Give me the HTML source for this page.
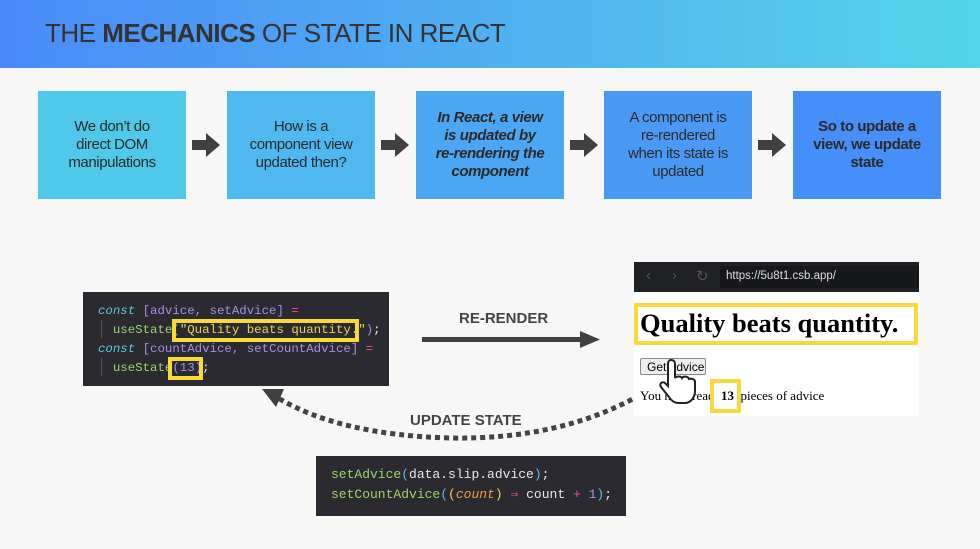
<!DOCTYPE html>
<html><head><meta charset="utf-8"><style>
*{margin:0;padding:0;box-sizing:border-box}
body{width:980px;height:549px;background:#f7f7f7;position:relative;overflow:hidden;font-family:"Liberation Sans",sans-serif}
.hdr{position:absolute;left:0;top:0;width:980px;height:68px;background:linear-gradient(90deg,#4a8af8,#55d5e8)}
.hdr h1{position:absolute;left:45px;top:18px;font-weight:400;font-size:26px;color:#333;letter-spacing:-0.5px}
.box{position:absolute;top:91px;width:148px;height:108px;display:flex;align-items:center;justify-content:center;text-align:center;font-size:15px;line-height:18px;color:#2a2a2a;padding:0 4px;letter-spacing:-0.4px}
.mono{font-family:"Liberation Mono",monospace}
.code{position:absolute;background:#2b2a30;font-size:12.4px;line-height:19px;white-space:pre}
.k{color:#5fc6e0;font-style:italic}.p{color:#a98de8}.g{color:#9bd36a}.y{color:#f2d24a}.r{color:#f0508a}.w{color:#e8e8e8}.o{color:#f09a40;font-style:italic}.b{color:#62b8f0}
.yb{position:absolute;border:4px solid #f9d93a}
.lbl{position:absolute;font-weight:700;font-size:15px;color:#444}
</style></head><body>
<div class="hdr"><h1>THE <b>MECHANICS</b> OF STATE IN REACT</h1></div>
<div class="box" style="left:38px;background:#50c8ea">We don’t do<br>direct DOM<br>manipulations</div>
<div class="box" style="left:227px;background:#4fb8ee">How is a<br>component view<br>updated then?</div>
<div class="box" style="left:416px;background:#4ba7f2;font-style:italic;font-weight:700">In React, a view<br>is updated by<br>re-rendering the<br>component</div>
<div class="box" style="left:604px;background:#4a9af5">A component is<br>re-rendered<br>when its state is<br>updated</div>
<div class="box" style="left:793px;background:#468ef8;font-weight:700">So to update a<br>view, we update<br>state</div>
<svg style="position:absolute;left:0;top:0" width="980" height="549">
<g fill="#404040">
<path d="M192 140h14v-7l14 12-14 12v-7h-14z"/>
<path d="M381 140h14v-7l14 12-14 12v-7h-14z"/>
<path d="M570 140h14v-7l14 12-14 12v-7h-14z"/>
<path d="M758 140h14v-7l14 12-14 12v-7h-14z"/>
<rect x="422" y="337" width="160" height="5"/>
<path d="M580 331l20 8.5-20 8.5z"/>
<path d="M262 389l22 0-8 18z"/>
</g>
<path d="M640 395 Q560 440 450 438 Q340 435 278 398" fill="none" stroke="#444" stroke-width="5" stroke-dasharray="5 4"/>
</svg>
<div class="lbl" style="left:459px;top:310px">RE-RENDER</div>
<div class="lbl" style="left:410px;top:412px">UPDATE STATE</div>
<div class="code mono" style="left:83px;top:292px;width:306px;height:94px;padding:10px 0 0 15px"><span class="k">const</span> <span class="p">[advice, setAdvice]</span> <span class="r">=</span>
  <span class="g">useState</span><span class="p">(</span><span class="y">"Quality beats quantity."</span><span class="p">)</span><span class="w">;</span>
<span class="k">const</span> <span class="p">[countAdvice, setCountAdvice]</span> <span class="r">=</span>
  <span class="g">useState</span><span class="p">(13)</span><span class="w">;</span></div>
<div style="position:absolute;left:101px;top:320px;width:1px;height:18px;background:#555"></div>
<div style="position:absolute;left:101px;top:358px;width:1px;height:18px;background:#555"></div>
<div class="yb" style="left:172px;top:319px;width:187px;height:23px"></div>
<div class="yb" style="left:168px;top:357px;width:35px;height:23px"></div>
<div style="position:absolute;left:634px;top:262px;width:285px;height:154px;background:#fff"></div>
<div style="position:absolute;left:634px;top:262px;width:285px;height:30px;background:#202124;color:#555;font-size:15px">
<span style="position:absolute;left:12px;top:5px">‹</span><span style="position:absolute;left:38px;top:5px">›</span><span style="position:absolute;left:62px;top:5px">↻</span>
<div style="position:absolute;left:86px;top:4px;width:199px;height:22px;background:#17181b;color:#ddd;font-size:11.5px;padding:4px 0 0 6px">https://5u8t1.csb.app/</div></div>
<div class="yb" style="left:634px;top:303px;width:284px;height:42px"></div>
<div style="position:absolute;left:640px;top:308px;font:700 26.5px 'Liberation Serif',serif;color:#000">Quality beats quantity.</div>
<div style="position:absolute;left:640px;top:358px;width:66px;height:17px;border:1px solid #888;border-radius:2px;background:#eee;font-size:12px;padding:1px 0 0 6px">Get advice</div>
<div style="position:absolute;left:640px;top:388px;font:13px 'Liberation Serif',serif;color:#000">You have read <b>&nbsp;13&nbsp;</b> pieces of advice</div>
<div class="yb" style="left:710px;top:379px;width:31px;height:34px;background:transparent"></div>
<svg style="position:absolute;left:655px;top:356px" width="45" height="50"><path d="M16 4c3 0 4 2 4 4v14c1-2 6-2 7 0 1-2 6-2 7 1 2-1 6 0 6 3v9c0 6-4 12-10 12h-7c-4 0-7-3-9-6l-8-10c-2-3 1-6 4-4l3 3V8c0-2 1-4 3-4z" fill="#fff" stroke="#222" stroke-width="2"/></svg>
<div class="code mono" style="left:316px;top:456px;width:310px;height:60px;padding:9px 0 0 15px;line-height:20px;font-size:13px"><span class="g">setAdvice</span><span class="b">(</span><span class="w">data.slip.advice</span><span class="b">)</span><span class="w">;</span>
<span class="g">setCountAdvice</span><span class="b">(</span><span class="y">(</span><span class="o">count</span><span class="y">)</span> <span class="r">⇒</span> <span class="w">count</span> <span class="r">+</span> <span class="p">1</span><span class="b">)</span><span class="w">;</span></div>
</body></html>
